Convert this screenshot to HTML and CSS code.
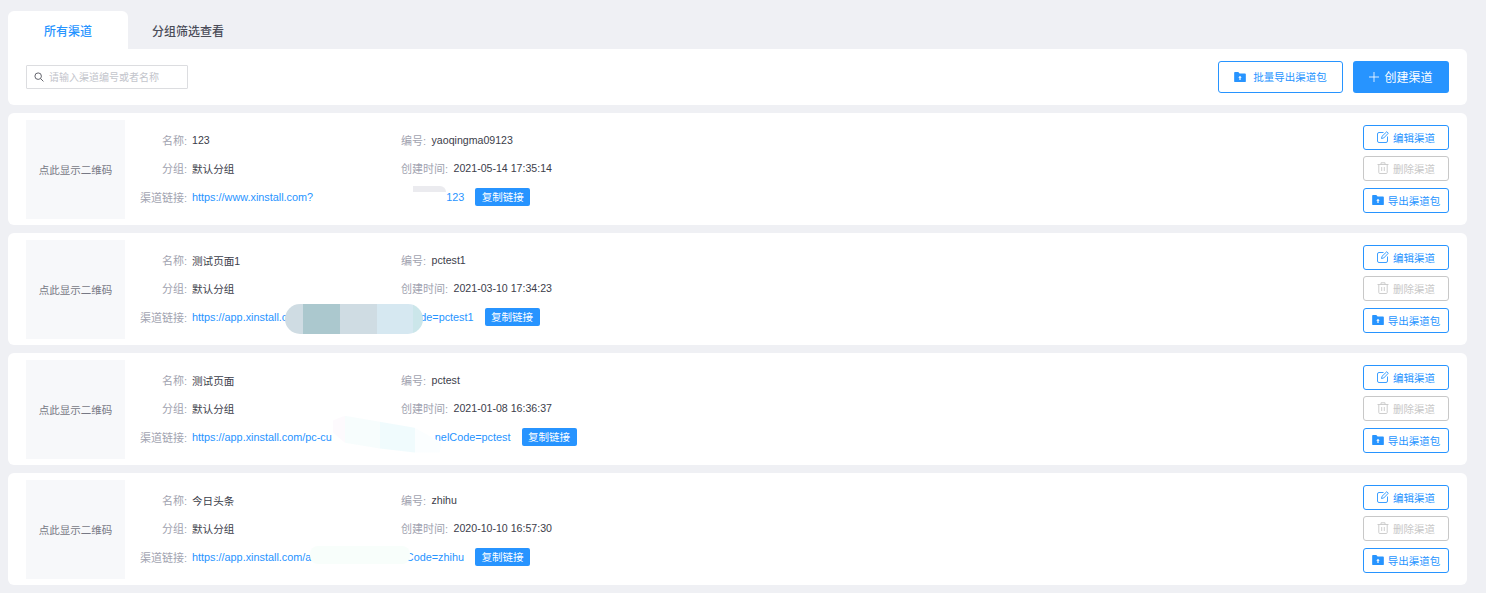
FILE: index.html
```html
<!DOCTYPE html>
<html lang="zh-CN">
<head>
  <meta charset="UTF-8">
  <meta name="viewport" content="width=device-width, initial-scale=1.0">
  <title>渠道管理</title>
  <link rel="stylesheet" href="styles.css">
</head>
<body>
  <svg class="sprite" aria-hidden="true">
    <symbol id="icon-folder" viewBox="0 0 14 12">
      <path fill="currentColor" d="M0 1a1 1 0 0 1 1-1h4l1.500 1.800H13a1 1 0 0 1 1 1V11a1 1 0 0 1-1 1H1a1 1 0 0 1-1-1z"/>
      <path fill="#fff" d="M7 4.500 9 6.800H7.700V9.500H6.300V6.800H5z"/>
    </symbol>
    <symbol id="icon-edit" viewBox="0 0 12 12">
      <path fill="none" stroke="currentColor" stroke-width=".9" d="M10.500 5.500V10a1.500 1.500 0 0 1-1.500 1.500H2A1.500 1.500 0 0 1 .5 10V3A1.500 1.500 0 0 1 2 1.500h4.500"/>
      <path fill="none" stroke="currentColor" stroke-width=".9" d="M4.500 7.500 5 5.300 9.800.7l1.500 1.500L6.700 7z"/>
    </symbol>
    <symbol id="icon-trash" viewBox="0 0 12 12">
      <path fill="none" stroke="currentColor" stroke-width=".9" d="M.5 2.500h11M4 2.500V.8h4v1.700M1.800 2.500v8a1 1 0 0 0 1 1h6.400a1 1 0 0 0 1-1v-8M4.700 5v4M7.300 5v4"/>
    </symbol>
  </svg>

  <div class="page">
    <div class="tabs">
      <div class="tab tab-active">所有渠道</div>
      <div class="tab">分组筛选查看</div>
    </div>

    <div class="toolbar">
      <label class="search">
        <svg class="search-icon" viewBox="0 0 12 12" fill="none" stroke="currentColor" stroke-width="1.100">
          <circle cx="5" cy="5" r="3.900"/>
          <path d="M8 8l3.300 3.300"/>
        </svg>
        <input type="text" placeholder="请输入渠道编号或者名称">
      </label>
      <div class="toolbar-actions">
        <button class="btn btn-outline"><svg class="icon-folder"><use href="#icon-folder"/></svg>批量导出渠道包</button>
        <button class="btn btn-primary"><svg class="icon-plus" viewBox="0 0 11 11" fill="none" stroke="currentColor" stroke-width=".9"><path d="M5.500 0v11M0 5.500h11"/></svg>创建渠道</button>
      </div>
    </div>

    <div class="card">
      <div class="qr">点此显示二维码</div>
      <div class="info">
        <div class="field"><span class="label">名称:</span><span class="value">123</span></div>
        <div class="field"><span class="meta">编号:</span><span class="value">yaoqingma09123</span></div>
        <div class="field"><span class="label">分组:</span><span class="value">默认分组</span></div>
        <div class="field"><span class="meta">创建时间:</span><span class="value">2021-05-14 17:35:14</span></div>
        <div class="field field-wide">
          <span class="label">渠道链接:</span>
          <a class="link" href="#">https://www.xinstall.com?<span class="gap gap-1"><i class="smear smear-1"></i></span>123</a>
          <button class="copy">复制链接</button>
        </div>
      </div>
      <div class="actions">
        <button class="btn-small"><svg class="icon-small"><use href="#icon-edit"/></svg>编辑渠道</button>
        <button class="btn-small btn-disabled"><svg class="icon-small"><use href="#icon-trash"/></svg>删除渠道</button>
        <button class="btn-small btn-export"><svg class="icon-folder"><use href="#icon-folder"/></svg>导出渠道包</button>
      </div>
    </div>

    <div class="card">
      <div class="qr">点此显示二维码</div>
      <div class="info">
        <div class="field"><span class="label">名称:</span><span class="value">测试页面1</span></div>
        <div class="field"><span class="meta">编号:</span><span class="value">pctest1</span></div>
        <div class="field"><span class="label">分组:</span><span class="value">默认分组</span></div>
        <div class="field"><span class="meta">创建时间:</span><span class="value">2021-03-10 17:34:23</span></div>
        <div class="field field-wide">
          <span class="label">渠道链接:</span>
          <a class="link" href="#">https://app.xinstall.c<span class="gap gap-2"><i class="smear smear-2"></i></span>de=pctest1</a>
          <button class="copy">复制链接</button>
        </div>
      </div>
      <div class="actions">
        <button class="btn-small"><svg class="icon-small"><use href="#icon-edit"/></svg>编辑渠道</button>
        <button class="btn-small btn-disabled"><svg class="icon-small"><use href="#icon-trash"/></svg>删除渠道</button>
        <button class="btn-small btn-export"><svg class="icon-folder"><use href="#icon-folder"/></svg>导出渠道包</button>
      </div>
    </div>

    <div class="card">
      <div class="qr">点此显示二维码</div>
      <div class="info">
        <div class="field"><span class="label">名称:</span><span class="value">测试页面</span></div>
        <div class="field"><span class="meta">编号:</span><span class="value">pctest</span></div>
        <div class="field"><span class="label">分组:</span><span class="value">默认分组</span></div>
        <div class="field"><span class="meta">创建时间:</span><span class="value">2021-01-08 16:36:37</span></div>
        <div class="field field-wide">
          <span class="label">渠道链接:</span>
          <a class="link" href="#">https://app.xinstall.com/pc-cu<span class="gap gap-3"><i class="smear smear-3"></i></span>nelCode=pctest</a>
          <button class="copy">复制链接</button>
        </div>
      </div>
      <div class="actions">
        <button class="btn-small"><svg class="icon-small"><use href="#icon-edit"/></svg>编辑渠道</button>
        <button class="btn-small btn-disabled"><svg class="icon-small"><use href="#icon-trash"/></svg>删除渠道</button>
        <button class="btn-small btn-export"><svg class="icon-folder"><use href="#icon-folder"/></svg>导出渠道包</button>
      </div>
    </div>

    <div class="card">
      <div class="qr">点此显示二维码</div>
      <div class="info">
        <div class="field"><span class="label">名称:</span><span class="value">今日头条</span></div>
        <div class="field"><span class="meta">编号:</span><span class="value">zhihu</span></div>
        <div class="field"><span class="label">分组:</span><span class="value">默认分组</span></div>
        <div class="field"><span class="meta">创建时间:</span><span class="value">2020-10-10 16:57:30</span></div>
        <div class="field field-wide">
          <span class="label">渠道链接:</span>
          <a class="link" href="#">https://app.xinstall.com/a<span class="gap gap-4"><i class="smear smear-4"></i></span>Code=zhihu</a>
          <button class="copy">复制链接</button>
        </div>
      </div>
      <div class="actions">
        <button class="btn-small"><svg class="icon-small"><use href="#icon-edit"/></svg>编辑渠道</button>
        <button class="btn-small btn-disabled"><svg class="icon-small"><use href="#icon-trash"/></svg>删除渠道</button>
        <button class="btn-small btn-export"><svg class="icon-folder"><use href="#icon-folder"/></svg>导出渠道包</button>
      </div>
    </div>
  </div>
</body>
</html>
```

FILE: styles.css
```css
* {
  box-sizing: border-box;
}

body {
  font-family: "Liberation Sans", "Noto Sans CJK SC", sans-serif;
  font-size: 11px;
  background-color: #eff0f4;
  color: #3b3d4a;
  margin: 0;
  overflow: hidden;
}

button {
  font-family: inherit;
  cursor: pointer;
}

.sprite {
  display: none;
}

.page {
  padding: 11px 19px 8px 8px;
}

.tabs {
  display: flex;
  height: 38px;
}

.tab {
  width: 120px;
  display: flex;
  align-items: center;
  justify-content: center;
  font-size: 12px;
  font-weight: 500;
  color: #4a4c58;
}

.tab-active {
  background-color: #fff;
  border-radius: 6px 6px 0 0;
  color: #2794ff;
}

.toolbar {
  height: 56px;
  background-color: #fff;
  border-radius: 0 6px 6px 6px;
  padding: 0 18px;
  display: flex;
  align-items: center;
  justify-content: space-between;
  margin-bottom: 8px;
}

.search {
  width: 162px;
  height: 24px;
  border: 1px solid #dcdde0;
  border-radius: 1px;
  display: flex;
  align-items: center;
  gap: 5px;
  padding-left: 7px;
}

.search-icon {
  width: 10px;
  height: 10px;
  color: #55575f;
  flex: none;
}

.search input {
  width: 130px;
  border: none;
  outline: none;
  padding: 0;
  font-family: inherit;
  font-size: 10px;
}

.search input::placeholder {
  color: #c3c5cc;
}

.toolbar-actions {
  display: flex;
  gap: 10px;
}

.btn {
  height: 32px;
  border-radius: 3px;
  padding: 0 0 1px;
  display: flex;
  align-items: center;
  justify-content: center;
}

.btn-outline {
  width: 125px;
  background-color: #fff;
  border: 1px solid #2794ff;
  color: #2794ff;
  font-size: 10.500px;
  gap: 7px;
}

.btn-primary {
  width: 96px;
  background-color: #2794ff;
  border: none;
  color: #fff;
  font-size: 12px;
  gap: 5px;
}

.icon-folder {
  width: 12px;
  height: 10px;
  color: #2794ff;
  flex: none;
}

.icon-plus {
  width: 10px;
  height: 10px;
  flex: none;
}

.card {
  height: 112px;
  background-color: #fff;
  border-radius: 6px;
  padding: 7px 18px;
  display: flex;
  margin-bottom: 8px;
}

.qr {
  width: 99px;
  height: 99px;
  background-color: #f7f8fa;
  color: #777985;
  font-size: 10.500px;
  padding-bottom: 1px;
  display: flex;
  align-items: center;
  justify-content: center;
  flex: none;
}

.info {
  flex: 1;
  display: grid;
  grid-template-columns: 276px 1fr;
  grid-template-rows: 28px 28px 30px;
  padding-top: 6px;
}

.field {
  display: flex;
  align-items: center;
  white-space: nowrap;
}

.field-wide {
  grid-column: 1 / 3;
}

.label {
  width: 67px;
  padding-right: 5px;
  text-align: right;
  color: #a1a3b0;
  flex: none;
}

.meta {
  color: #a1a3b0;
  margin-right: 5.500px;
}

.value {
  color: #3b3d4a;
  font-size: 10.600px;
}

.link {
  color: #2794ff;
  font-size: 10.850px;
  text-decoration: none;
}

.gap {
  display: inline-block;
  position: relative;
  height: 1px;
  vertical-align: middle;
}

.gap-1 {
  width: 133px;
}

.gap-2 {
  width: 133px;
}

.gap-3 {
  width: 103px;
}

.gap-4 {
  width: 94.500px;
}

/* redacted parts of the links */
.smear {
  position: absolute;
  display: block;
}

.smear-1 {
  left: 100px;
  top: -12px;
  width: 33px;
  height: 6px;
  background-color: #ebebef;
  border-radius: 0 8px 0 0;
}

.smear-2 {
  left: -2px;
  top: -14px;
  width: 138px;
  height: 30px;
  border-radius: 15px;
  background: linear-gradient(to right, #cfdce3 13%, #abc8ce 13%, #abc8ce 40%, #cfdce3 40%, #cfdce3 67%, #d6e8f1 67%, #d6e8f1 93%, #cbe6ea 93%);
}

.smear-3 {
  left: 1px;
  top: -22px;
  width: 109px;
  height: 40px;
  clip-path: polygon(0 12%, 11% 0, 75% 30%, 100% 68%, 98% 92%, 75% 92%, 43% 82%, 11% 68%, 0 42%);
  background: linear-gradient(to right, #fdfafd 11%, #f7fdfd 11%, #f7fdfd 43%, #f0fbfd 43%, #f0fbfd 75%, #fbfeff 75%);
}

.smear-4 {
  left: -1px;
  top: -12px;
  width: 100px;
  height: 18px;
  border-radius: 8px;
  background-color: #f8fefb;
}

.copy {
  height: 18px;
  width: 55px;
  margin-left: 11px;
  padding: 0 0 1px;
  border: none;
  border-radius: 2px;
  background-color: #2794ff;
  color: #fff;
  font-size: 10.500px;
}

.actions {
  width: 86px;
  flex: none;
  display: flex;
  flex-direction: column;
  gap: 6px;
  padding-top: 5px;
}

.btn-small {
  height: 25px;
  padding: 0 0 1px;
  background-color: #fff;
  border: 1px solid #2794ff;
  border-radius: 3px;
  color: #2794ff;
  font-size: 10.500px;
  display: flex;
  align-items: center;
  justify-content: center;
  gap: 4px;
}

.btn-export {
  margin-top: 1px;
}

.btn-disabled {
  border-color: #c8c8c8;
  color: #c8c8c8;
}

.icon-small {
  width: 12px;
  height: 12px;
  flex: none;
}
```
